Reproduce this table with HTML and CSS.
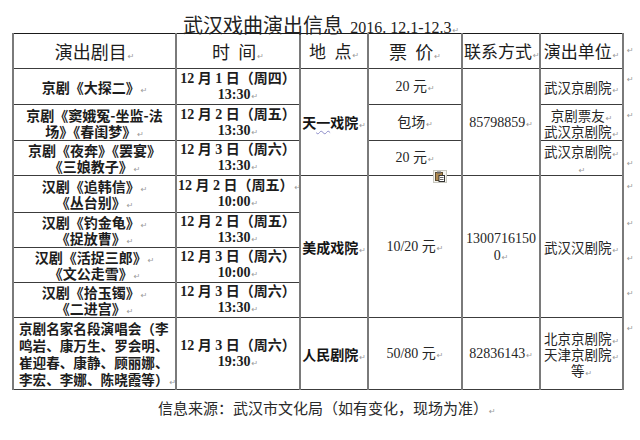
FILE: index.html
```html
<!DOCTYPE html>
<html lang="zh-CN">
<head>
<meta charset="utf-8">
<title>武汉戏曲演出信息</title>
<link rel="stylesheet" href="styles.css">
</head>
<body>
<div class="page">
  <h1 class="title"><span class="t-cn">武汉戏曲演出信息</span> <span class="t-en">2016. 12.1-12.3</span><span class="pm">↵</span></h1>
  <table class="sched">
    <colgroup>
      <col class="c1"><col class="c2"><col class="c3"><col class="c4"><col class="c5"><col class="c6"><col class="c7">
    </colgroup>
    <tr class="r-head">
      <th class="wide">演出剧目<span class="pm">↵</span></th>
      <th class="wide">时&nbsp;&nbsp;间<span class="pm">↵</span></th>
      <th>地&ensp;点<span class="pm">↵</span></th>
      <th class="wide">票&nbsp;&nbsp;价<span class="pm">↵</span></th>
      <th>联系方式<span class="pm">↵</span></th>
      <th>演出单位<span class="pm">↵</span></th>
      <td class="eor"><span class="pm">↵</span></td>
    </tr>
    <tr class="r36">
      <td class="play">京剧《大探二》<span class="pm">↵</span></td>
      <td class="time">12 月 1 日（周四）<br>13:30<span class="pm">↵</span></td>
      <td class="venue" rowspan="3">天<span class="squig">一</span>戏院<span class="pm">↵</span></td>
      <td class="price">20 元<span class="pm">↵</span></td>
      <td class="phone" rowspan="3">85798859<span class="pm">↵</span></td>
      <td class="unit">武汉京剧院<span class="pm">↵</span></td>
      <td class="eor"><span class="pm">↵</span></td>
    </tr>
    <tr class="r36">
      <td class="play">京剧《窦娥冤-坐监-法<br>场》《春闺梦》<span class="pm">↵</span></td>
      <td class="time">12 月 2 日（周五）<br>13:30<span class="pm">↵</span></td>
      <td class="price">包场<span class="pm">↵</span></td>
      <td class="unit">京剧票友<span class="pm">↵</span><br>武汉京剧院<span class="pm">↵</span></td>
      <td class="eor"><span class="pm">↵</span></td>
    </tr>
    <tr class="r35">
      <td class="play">京剧《夜奔》《罢宴》<br>《三娘教子》<span class="pm">↵</span></td>
      <td class="time">12 月 3 日（周六）<br>13:30<span class="pm">↵</span></td>
      <td class="price">20 元<span class="pm">↵</span></td>
      <td class="unit top">武汉京剧院<span class="pm">↵</span><br><span class="pm">↵</span></td>
      <td class="eor mid"><span class="pm">↵</span></td>
    </tr>
    <tr class="r37">
      <td class="play">汉剧《追韩信》<span class="pm">↵</span><br>《丛台别》<span class="pm">↵</span></td>
      <td class="time">12 月 2 日（周五）<span class="pm">↵</span><br>10:00<span class="pm">↵</span></td>
      <td class="venue" rowspan="4">美成戏院<span class="pm">↵</span></td>
      <td class="price" rowspan="4">10/20 元<span class="pm">↵</span></td>
      <td class="phone" rowspan="4">1300716150<br>0<span class="pm">↵</span></td>
      <td class="unit" rowspan="4">武汉汉剧院<span class="pm">↵</span></td>
      <td class="eor"><span class="pm">↵</span></td>
    </tr>
    <tr class="r35">
      <td class="play">汉剧《钓金龟》<span class="pm">↵</span><br>《捉放曹》<span class="pm">↵</span></td>
      <td class="time">12 月 2 日（周五）<br>13:30<span class="pm">↵</span></td>
      <td class="eor"><span class="pm">↵</span></td>
    </tr>
    <tr class="r35">
      <td class="play">汉剧《活捉三郎》<span class="pm">↵</span><br>《文公走雪》<span class="pm">↵</span></td>
      <td class="time">12 月 3 日（周六）<br>10:00<span class="pm">↵</span></td>
      <td class="eor"><span class="pm">↵</span></td>
    </tr>
    <tr class="r35">
      <td class="play">汉剧《拾玉镯》<span class="pm">↵</span><br>《二进宫》<span class="pm">↵</span></td>
      <td class="time">12 月 3 日（周六）<br>13:30<span class="pm">↵</span></td>
      <td class="eor"><span class="pm">↵</span></td>
    </tr>
    <tr class="r72">
      <td class="play left">京剧名家名段演唱会（李<br>鸣岩、康万生、罗会明、<br>崔迎春、康静、顾丽娜、<br>李宏、李娜、陈晓霞等）<span class="pm">↵</span></td>
      <td class="time">12 月 3 日（周六）<br>19:30<span class="pm">↵</span></td>
      <td class="venue">人民剧院<span class="pm">↵</span></td>
      <td class="price">50/80 元<span class="pm">↵</span></td>
      <td class="phone">82836143<span class="pm">↵</span></td>
      <td class="unit">北京京剧院<span class="pm">↵</span><br>天津京剧院<span class="pm">↵</span><br>等<span class="pm">↵</span></td>
      <td class="eor"><span class="pm">↵</span></td>
    </tr>
  </table>
  <p class="source">信息来源：武汉市文化局（如有变化，现场为准）<span class="pm">↵</span></p>
  <div class="paste-icon" aria-hidden="true">
    <svg width="14" height="13" viewBox="0 0 14 13">
      <rect x="0.5" y="0.5" width="13" height="12" fill="#f4f4f0" stroke="#c8c8c0"/>
      <rect x="2.5" y="2.5" width="7" height="8" fill="#b08a50" stroke="#5a4a30"/>
      <rect x="4" y="1.5" width="4" height="2" fill="#666" />
      <rect x="6" y="5.5" width="5.5" height="6" fill="#fff" stroke="#333"/>
      <line x1="7" y1="7.5" x2="10.5" y2="7.5" stroke="#666"/>
      <line x1="7" y1="9.5" x2="10.5" y2="9.5" stroke="#666"/>
    </svg>
  </div>
</div>
</body>
</html>
```

FILE: styles.css
```css
html, body {
  margin: 0;
  padding: 0;
  background: #ffffff;
}

.page {
  position: relative;
  width: 640px;
  height: 440px;
  overflow: hidden;
  color: #151515;
  font-family: "Noto Sans CJK SC", "Liberation Sans", sans-serif;
}

.title {
  margin: 0;
  height: 33px;
  box-sizing: border-box;
  padding: 6px 0 0 183px;
  font-weight: 400;
  line-height: 26px;
  white-space: nowrap;
}

.t-cn {
  font-size: 20px;
  color: #222;
}

.t-en {
  font-family: "Liberation Serif", serif;
  font-size: 16px;
  color: #222;
}

.pm {
  font-family: "DejaVu Sans", sans-serif;
  font-size: 8px;
  font-weight: 400;
  line-height: 0;
  color: #9a9a9a;
  margin-left: 1px;
}

.sched {
  margin-left: 12px;
  border-collapse: collapse;
  table-layout: fixed;
  width: 626px;
}

.c1 { width: 163px; }
.c2 { width: 124px; }
.c3 { width: 68px; }
.c4 { width: 94px; }
.c5 { width: 78px; }
.c6 { width: 83px; }
.c7 { width: 16px; }

.sched th,
.sched td {
  border-left: 2px solid #7a7a7a;
  border-right: 2px solid #7a7a7a;
  border-top: 1px solid #3c3c3c;
  border-bottom: 1px solid #3c3c3c;
  padding: 0 1px;
  text-align: center;
  vertical-align: middle;
  white-space: nowrap;
  overflow: hidden;
}

.sched .eor {
  border: none;
  text-align: left;
  vertical-align: top;
  padding: 2px 0 0 2px;
  line-height: 8px;
}

.sched .eor.mid {
  vertical-align: middle;
}

.sched tr:first-child th {
  border-top: 1px solid #1a1a1a;
}

.sched tr:first-child .eor {
  padding-top: 8px;
}

.sched th {
  font-size: 17px;
  font-weight: 400;
  line-height: 20px;
  color: #1c1c1c;
}

.sched th.wide {
  font-size: 18px;
}

.r-head { height: 35px; }
.r35 { height: 35px; }
.r36 { height: 36px; }
.r37 { height: 37px; }
.r72 { height: 72px; }

.play {
  font-size: 14px;
  font-weight: 700;
  line-height: 16px;
  color: #1d1d1d;
}

.play.left {
  text-align: left;
  font-size: 13.6px;
  line-height: 17px;
  padding-left: 5px;
}

.time {
  font-family: "Liberation Serif", "Noto Sans CJK SC", serif;
  font-size: 14px;
  font-weight: 700;
  line-height: 16px;
  color: #1d1d1d;
}

.venue {
  font-size: 14px;
  font-weight: 700;
  line-height: 16px;
  padding-left: 4px;
}

.squig {
  text-decoration: underline wavy #8c8cc8;
  text-decoration-thickness: 1px;
  text-underline-offset: 2px;
}

.price {
  font-family: "Liberation Serif", "Noto Sans CJK SC", serif;
  font-size: 14px;
  line-height: 16px;
  color: #262626;
}

.phone {
  font-family: "Liberation Serif", serif;
  font-size: 14px;
  line-height: 17px;
  color: #262626;
}

.unit {
  font-size: 13.5px;
  line-height: 16px;
  color: #262626;
}

.unit.top {
  vertical-align: top;
  padding-top: 2px;
}

.source {
  margin: 8px 0 0 158px;
  font-size: 15px;
  line-height: 20px;
  color: #2a2a2a;
  white-space: nowrap;
}

.paste-icon {
  position: absolute;
  left: 433px;
  top: 170px;
  width: 14px;
  height: 13px;
  line-height: 0;
}
```
